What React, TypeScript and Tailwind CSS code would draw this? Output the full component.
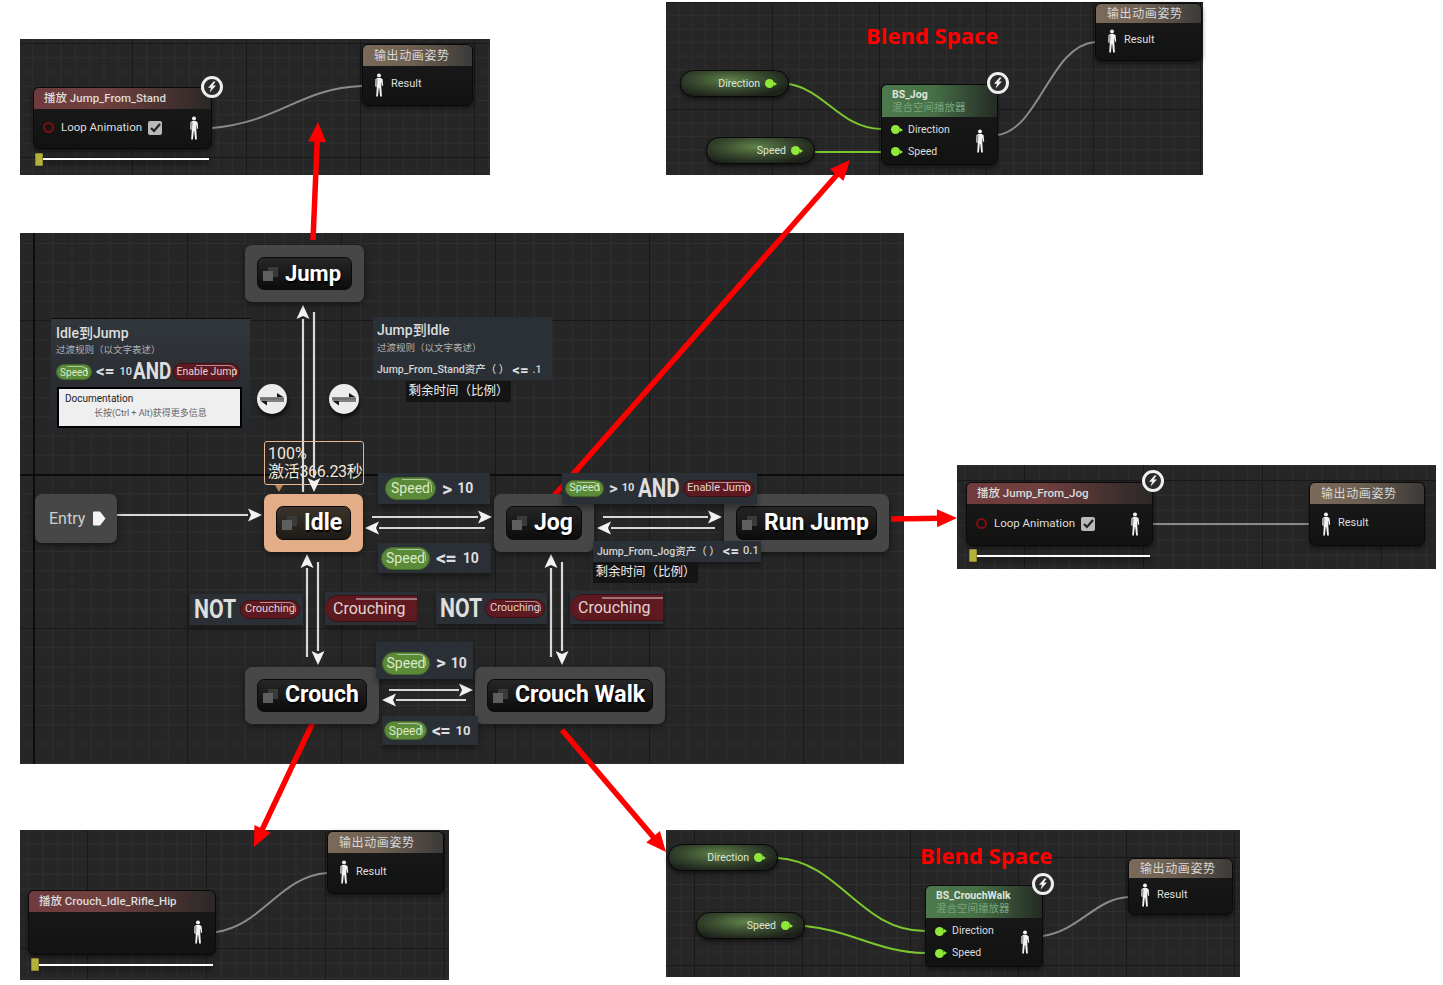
import React from "react";

const GRID = "absolute overflow-hidden bg-[#262626] bg-[image:linear-gradient(#191919_1px,transparent_1px),linear-gradient(90deg,#191919_1px,transparent_1px),linear-gradient(#2f2f2f_1px,transparent_1px),linear-gradient(90deg,#2f2f2f_1px,transparent_1px)]";

function Person({ className = "" }: { className?: string }) {
  return (
    <svg viewBox="0 0 10 24" className={"shrink-0 w-[10px] h-[24px] " + className} fill="#f2f2f2">
      <circle cx="5" cy="2.4" r="2" />
      <path d="M3.2 5h3.6l1.8 1.2.6 6.6-.9.3-.7-4.6-.3 5.2.6 9.8H6.1L5.2 15h-.4l-.9 8.5H2.2l.6-9.8-.3-5.2-.7 4.6-.9-.3.6-6.6z" />
      <path d="M1 6.2h2.6L3 14H1.4z" fill="#9a9a9a" />
    </svg>
  );
}

function Bolt({ className }: { className: string }) {
  return (
    <div className={"absolute w-[22px] h-[22px] rounded-full border-[3px] border-[#f0f0f0] bg-[#2a2a2a] flex items-center justify-center " + className}>
      <svg viewBox="0 0 12 12" className="w-[12px] h-[12px]" fill="#f0f0f0">
        <path d="M7.5.5 2 6.8h3L3.6 11.5 10 4.6H6.8L9.6.5z" />
      </svg>
    </div>
  );
}

function Dot() {
  return (
    <span className="relative inline-block w-[9px] h-[9px] rounded-full bg-[#8fe83a] shrink-0 after:content-[''] after:absolute after:left-[9px] after:top-[2.5px] after:border-y-[2px] after:border-l-[3px] after:border-y-transparent after:border-l-[#8fe83a]" />
  );
}

function Shell({ className, header, children }: { className: string; header: React.ReactNode; children: React.ReactNode }) {
  return (
    <div className={"absolute flex flex-col rounded-[6px] overflow-hidden border border-[#0a0a0a] bg-[linear-gradient(180deg,#1a1a1a,#111311)] shadow-[0_2px_5px_rgba(0,0,0,0.55)] text-[#dedede] " + className}>
      {header}
      {children}
    </div>
  );
}

function ResultNode({ className, headH }: { className: string; headH: string }) {
  return (
    <Shell
      className={className}
      header={
        <div className={"flex items-center pl-[11px] text-[12px] tracking-[0.6px] text-[#d8d8d8] bg-[linear-gradient(90deg,#7b6a59,#6e6052_45%,#3b3a38)] " + headH}>
          输出动画姿势
        </div>
      }
    >
      <div className="flex-1 flex items-center pl-[11px] gap-[7px] text-[11px] pb-[2px]">
        <Person />
        <span>Result</span>
      </div>
    </Shell>
  );
}

function PlayNode({ className, title, loop }: { className: string; title: string; loop: boolean }) {
  return (
    <Shell
      className={className}
      header={
        <div className="h-[21px] flex items-center pl-[10px] text-[11.5px] font-medium text-[#dcdcdc] bg-[linear-gradient(90deg,#6f3b3e,#70403f_40%,#2a2827)]">
          {title}
        </div>
      }
    >
      <div className="flex-1 flex items-center pl-[9px] pr-[12px] pb-[2px] text-[11.5px]">
        {loop && (
          <>
            <span className="w-[11px] h-[11px] rounded-full border-2 border-[#7c0f10] shrink-0" />
            <span className="ml-[7px]">Loop Animation</span>
            <span className="ml-[6px] w-[14px] h-[14px] rounded-[2px] bg-[#b9b9b9] flex items-center justify-center">
              <svg viewBox="0 0 12 12" className="w-[12px] h-[12px]" fill="none" stroke="#222" strokeWidth="2.2">
                <path d="M2 6l3 3 6-7" />
              </svg>
            </span>
          </>
        )}
        <Person className="ml-auto" />
      </div>
    </Shell>
  );
}

function Slider({ line, handle }: { line: string; handle: string }) {
  return (
    <>
      <div className={"absolute h-[2px] bg-white shadow-[0_3px_5px_rgba(0,0,0,0.7)] " + line} />
      <div className={"absolute w-[8px] h-[13px] bg-[#b5b23c] rounded-[1px] border border-[#8c8a2c] " + handle} />
    </>
  );
}

function BlendNode({ className, title }: { className: string; title: string }) {
  return (
    <Shell
      className={className}
      header={
        <div className="h-[32px] flex flex-col justify-center pl-[10px] leading-[13px] bg-[linear-gradient(90deg,#4d7a4d,#466f46_45%,#242a24)]">
          <span className="text-[10.5px] font-bold text-[#dfe6df]">{title}</span>
          <span className="text-[10.5px] text-[#7da37d]">混合空间播放器</span>
        </div>
      }
    >
      <div className="flex-1 flex items-center pl-[9px] pr-[12px] text-[10.5px]">
        <div className="flex flex-col gap-[9px]">
          <div className="flex items-center gap-[7px] h-[13px]"><Dot /><span className="ml-[1px]">Direction</span></div>
          <div className="flex items-center gap-[7px] h-[13px]"><Dot /><span className="ml-[1px]">Speed</span></div>
        </div>
        <Person className="ml-auto" />
      </div>
    </Shell>
  );
}

function Getter({ className, label }: { className: string; label: string }) {
  return (
    <div className={"absolute flex items-center justify-end pr-[14px] gap-[5px] rounded-full border border-[#080808] bg-[#1c211a] bg-[radial-gradient(ellipse_at_45%_35%,#5f8348_0%,#3a4c30_40%,#1c211a_78%)] shadow-[0_2px_4px_rgba(0,0,0,0.6)] text-[10.5px] text-[#dde5d8] " + className}>
      <span>{label}</span>
      <Dot />
    </div>
  );
}

function State({ className, inner, label, size, active }: { className: string; inner?: string; label: string; size: string; active?: boolean }) {
  return (
    <div className={"absolute p-[12px] rounded-[7px] shadow-[0_2px_6px_rgba(0,0,0,0.5)] " + (active ? "bg-[#e3ae87] " : "bg-[#474747] ") + className}>
      <div className={"h-full flex items-center pl-[5px] gap-[7px] rounded-[7px] border border-[#0b0b0b] " + (active ? "bg-[linear-gradient(180deg,#3c342c,#1d1a16)] " : "bg-[linear-gradient(180deg,#262626,#0c0c0c)] ") + (inner ?? "")}>
        <span className="relative w-[15px] h-[14px] shrink-0">
          <span className="absolute right-0 top-0 w-[10px] h-[10px] bg-[#3a3a3a]" />
          <span className="absolute left-0 bottom-0 w-[10px] h-[10px] bg-[#5e5e5e]" />
        </span>
        <span className={"font-bold text-white [text-shadow:1px_2px_1px_#000] " + size}>{label}</span>
      </div>
    </div>
  );
}

function Pill({ red, className, label }: { red?: boolean; className: string; label: string }) {
  return (
    <span className={"relative inline-flex items-center justify-center rounded-full shrink-0 border " + (red ? "bg-[#5e1a20] border-[#3e1014] text-[#e3d3d3] " : "bg-[#5b8a38] border-[#43692a] text-[#dcebc9] ") + className}>
      <span className="absolute top-[1px] right-[3px] w-[62%] h-[60%] rounded-tr-[7px] border-t border-r border-white/50" />
      {label}
    </span>
  );
}

function Wide({ className, children }: { className: string; children: string }) {
  return <span className={"font-bold text-[#dedede] shrink-0 " + className}>{children}</span>;
}

function Box({ className, children }: { className: string; children: React.ReactNode }) {
  return (
    <div className={"absolute flex items-center bg-[#2b3036] shadow-[0_4px_6px_rgba(0,0,0,0.35)] " + className}>
      {children}
    </div>
  );
}

function Swap({ className }: { className: string }) {
  return (
    <div className={"absolute w-[30px] h-[30px] rounded-full bg-[#ececec] shadow-[1px_3px_4px_rgba(0,0,0,0.7)] flex items-center justify-center " + className}>
      <svg viewBox="0 0 30 30" className="w-[30px] h-[30px]" fill="#161616">
        <path d="M3 13h17V9l7 4.6H3zM27 16.4H3l7 5v-4h17z" />
        <path d="M3 14.2h24v1.6H3z" fill="#555" />
      </svg>
    </div>
  );
}

function WhiteArrow({ x1, y1, x2, y2 }: { x1: number; y1: number; x2: number; y2: number }) {
  const a = Math.atan2(y2 - y1, x2 - x1);
  const L = 14;
  const W = 6.5;
  const bx = x2 - L * Math.cos(a);
  const by = y2 - L * Math.sin(a);
  const nx = -Math.sin(a) * W;
  const ny = Math.cos(a) * W;
  return (
    <g>
      <line x1={x1} y1={y1} x2={bx} y2={by} stroke="#d8d8d8" strokeWidth="2.2" />
      <polygon points={`${x2},${y2} ${bx + nx},${by + ny} ${bx + 3 * Math.cos(a)},${by + 3 * Math.sin(a)} ${bx - nx},${by - ny}`} fill="#f2f2f2" />
    </g>
  );
}

function RedArrow({ x1, y1, x2, y2 }: { x1: number; y1: number; x2: number; y2: number }) {
  const a = Math.atan2(y2 - y1, x2 - x1);
  const L = 20;
  const W = 9;
  const bx = x2 - L * Math.cos(a);
  const by = y2 - L * Math.sin(a);
  const nx = -Math.sin(a) * W;
  const ny = Math.cos(a) * W;
  return (
    <g>
      <line x1={x1} y1={y1} x2={bx + 4 * Math.cos(a)} y2={by + 4 * Math.sin(a)} stroke="#ff0000" strokeWidth="5.5" />
      <polygon points={`${x2},${y2} ${bx + nx},${by + ny} ${bx - nx},${by - ny}`} fill="#ff0000" />
    </g>
  );
}

function Blend({ className }: { className: string }) {
  return (
    <div className={"absolute font-['Open_Sans',sans-serif] font-bold text-[22px] leading-[28px] text-[#ff0000] whitespace-nowrap " + className}>
      Blend Space
    </div>
  );
}

export default function App() {
  return (
    <div className="relative w-[1443px] h-[985px] bg-white overflow-hidden font-[Roboto,'Noto_Sans_CJK_SC',sans-serif]">
      {/* graph panels */}
      <div className={GRID + " left-[20px] top-[39px] w-[470px] h-[136px] bg-[size:114px_114px,114px_114px,14.25px_14.25px,14.25px_14.25px] bg-[position:112px_4px,112px_4px,112px_4px,112px_4px]"} />
      <div className={GRID + " left-[666px] top-[2px] w-[537px] h-[173px] bg-[size:107px_107px,107px_107px,13.4px_13.4px,13.4px_13.4px] bg-[position:106px_0px,106px_0px,106px_0px,106px_0px]"} />
      <div className={GRID + " left-[20px] top-[233px] w-[884px] h-[531px] bg-[size:154px_154px,154px_154px,19.25px_19.25px,19.25px_19.25px] bg-[position:13px_87px,13px_87px,13px_87px,13px_87px]"}>
        <div className="absolute left-[13px] top-0 w-[2px] h-full bg-[#0c0c0c]" />
        <div className="absolute left-0 top-[241px] w-full h-[2px] bg-[#0c0c0c]" />
      </div>
      <div className={GRID + " left-[957px] top-[465px] w-[479px] h-[104px] bg-[size:119px_119px,119px_119px,14.9px_14.9px,14.9px_14.9px] bg-[position:67px_15px,67px_15px,67px_15px,67px_15px]"} />
      <div className={GRID + " left-[20px] top-[830px] w-[429px] h-[150px] bg-[size:119px_119px,119px_119px,14.9px_14.9px,14.9px_14.9px] bg-[position:67px_118px,67px_118px,67px_118px,67px_118px]"} />
      <div className={GRID + " left-[666px] top-[830px] w-[574px] h-[147px] bg-[size:108px_108px,108px_108px,13.5px_13.5px,13.5px_13.5px] bg-[position:136px_27px,136px_27px,136px_27px,136px_27px]"} />

      {/* wires, transitions and callout arrows */}
      <svg className="absolute left-0 top-0 w-[1443px] h-[985px]" viewBox="0 0 1443 985" fill="none">
        <path d="M212 128C280 122 300 88 362 86" stroke="#8a8a8a" strokeWidth="2" />
        <path d="M998 135C1040 128 1050 46 1095 42" stroke="#8a8a8a" strokeWidth="2" />
        <path d="M789 84C825 90 840 128 881 129" stroke="#7cc62e" strokeWidth="2" />
        <path d="M815 152H881" stroke="#7cc62e" strokeWidth="2" />
        <path d="M1153 524H1309" stroke="#8a8a8a" strokeWidth="2" />
        <path d="M216 932C262 926 280 876 327 873" stroke="#8a8a8a" strokeWidth="2" />
        <path d="M778 858C840 862 860 931 925 931" stroke="#7cc62e" strokeWidth="2" />
        <path d="M805 926C850 930 880 953 925 953" stroke="#7cc62e" strokeWidth="2" />
        <path d="M1043 936C1080 930 1095 899 1128 897" stroke="#8a8a8a" strokeWidth="2" />

        <WhiteArrow x1={117} y1={515} x2={262} y2={515} />
        <WhiteArrow x1={372} y1={517} x2={492} y2={517} />
        <WhiteArrow x1={485} y1={528} x2={365} y2={528} />
        <WhiteArrow x1={603} y1={517} x2={722} y2={517} />
        <WhiteArrow x1={715} y1={528} x2={597} y2={528} />
        <WhiteArrow x1={303} y1={492} x2={303} y2={305} />
        <WhiteArrow x1={307} y1={657} x2={307} y2={554} />
        <WhiteArrow x1={318} y1={562} x2={318} y2={665} />
        <WhiteArrow x1={551} y1={657} x2={551} y2={554} />
        <WhiteArrow x1={562} y1={562} x2={562} y2={665} />
        <WhiteArrow x1={389} y1={690} x2={473} y2={690} />
        <WhiteArrow x1={466} y1={700} x2={382} y2={700} />

        <RedArrow x1={313} y1={240} x2={318} y2={122} />
        <RedArrow x1={552} y1={498} x2={850} y2={160} />
        <RedArrow x1={891} y1={519} x2={957} y2={518} />
        <RedArrow x1={313} y1={722} x2={254} y2={847} />
        <RedArrow x1={562} y1={730} x2={666} y2={852} />
      </svg>

      {/* top-left animation graph */}
      <PlayNode className="left-[33px] top-[87px] w-[179px] h-[62px]" title="播放 Jump_From_Stand" loop />
      <Bolt className="left-[201px] top-[76px]" />
      <Slider line="left-[37px] top-[158px] w-[172px]" handle="left-[35px] top-[153px]" />
      <ResultNode className="left-[362px] top-[44px] w-[111px] h-[62px]" headH="h-[21px]" />

      {/* top-right blend graph */}
      <Blend className="left-[866px] top-[21px]" />
      <Getter className="left-[680px] top-[70px] w-[109px] h-[27px]" label="Direction" />
      <Getter className="left-[706px] top-[137px] w-[109px] h-[27px]" label="Speed" />
      <BlendNode className="left-[881px] top-[84px] w-[117px] h-[81px]" title="BS_Jog" />
      <Bolt className="left-[987px] top-[72px]" />
      <ResultNode className="left-[1095px] top-[3px] w-[107px] h-[58px]" headH="h-[19px]" />

      {/* state machine */}
      <State className="left-[245px] top-[245px] w-[119px] h-[57px]" label="Jump" size="text-[22px]" />
      <div className="absolute left-[35px] top-[494px] w-[82px] h-[49px] rounded-[7px] bg-[#474747] shadow-[0_2px_6px_rgba(0,0,0,0.5)] flex items-center pl-[14px] gap-[7px] text-[16px] text-[#cfcfcf]">
        Entry
        <svg viewBox="0 0 14 15" className="w-[14px] h-[15px]" fill="#f4f4f4"><path d="M1 1.5q0-1 1-1h6l5.500 7-5.500 7H2q-1 0-1-1z" /></svg>
      </div>
      <State className="left-[264px] top-[494px] w-[99px] h-[58px]" label="Idle" size="text-[23px]" active />
      <State className="left-[494px] top-[494px] w-[100px] h-[58px]" label="Jog" size="text-[23px]" />
      <State className="left-[724px] top-[494px] w-[165px] h-[58px]" label="Run Jump" size="text-[23px]" />
      <State className="left-[245px] top-[667px] w-[134px] h-[57px]" label="Crouch" size="text-[23px]" />
      <State className="left-[475px] top-[667px] w-[190px] h-[57px]" label="Crouch Walk" size="text-[23px]" />

      <div className="absolute left-[264px] top-[441px] w-[100px] h-[44px] rounded-[3px] border border-[#e9b78f] bg-[linear-gradient(180deg,#bd8f6a,#e0a97e)]/90 px-[3px] leading-[18px] pt-[3px] text-[16px] text-[#efe6dc] whitespace-nowrap">
        <div>100%</div>
        <div className="tracking-[-0.3px]">激活366.23秒</div>
      </div>
      <div className="absolute left-[275px] top-[485px] border-x-[4px] border-t-[7px] border-x-transparent border-t-[#b98357]" />
      <svg className="absolute left-[300px] top-[305px] w-[30px] h-[190px]" viewBox="300 305 30 190" fill="none">
        <WhiteArrow x1={314} y1={312} x2={314} y2={492} />
      </svg>

      <Swap className="left-[257px] top-[384px]" />
      <Swap className="left-[329px] top-[384px]" />

      {/* tooltip: Idle to Jump */}
      <div className="absolute left-[51px] top-[318px] w-[199px] h-[112px] bg-[linear-gradient(180deg,#32373d,#24272b)] border-t border-[#0c0c0c] px-[5px] pt-[5px] flex flex-col">
        <div className="text-[14px] leading-[18px] font-medium text-[#dedede]">Idle到Jump</div>
        <div className="text-[9.5px] leading-[14px] mt-[1px] text-[#b0b0b0]">过渡规则（以文字表述）</div>
        <div className="flex items-center mt-[5px] h-[20px]">
          <Pill className="w-[36px] h-[16px] text-[10px]" label="Speed" />
          <Wide className="ml-[4px] text-[17px]">{"<="}</Wide>
          <span className="ml-[5px] text-[11px] font-medium text-[#dedede] w-[11px] shrink-0">10</span>
          <Wide className="ml-[3px] w-[37px] text-[23px] scale-x-[0.82] origin-left">AND</Wide>
          <Pill red className="ml-[3px] w-[67px] h-[18px] text-[10.5px]" label="Enable Jump" />
        </div>
        <div className="ml-[1px] mt-[5px] w-[185px] h-[41px] bg-[#efefef] border-2 border-black flex flex-col pl-[6px] pt-[3px] text-[#222]">
          <span className="text-[10px] leading-[13px]">Documentation</span>
          <span className="text-[9px] leading-[13px] mt-[2px] ml-[29px] text-[#666]">长按(Ctrl + Alt)获得更多信息</span>
        </div>
      </div>

      {/* tooltip: Jump to Idle */}
      <div className="absolute left-[373px] top-[317px] w-[179px] h-[63px] bg-[#2b3036] px-[4px] pt-[4px] flex flex-col">
        <div className="text-[14px] leading-[18px] font-medium text-[#dedede]">Jump到Idle</div>
        <div className="text-[9.5px] leading-[14px] mt-[2px] text-[#b0b0b0]">过渡规则（以文字表述）</div>
        <div className="flex items-center mt-[7px] h-[16px] text-[10.5px] font-medium text-[#d4d4d4] whitespace-nowrap">
          Jump_From_Stand资产（ ）
          <Wide className="ml-[3px] text-[15px]">{"<="}</Wide>
          <span className="ml-[4px]">.1</span>
        </div>
      </div>
      <div className="absolute left-[406px] top-[381px] w-[105px] h-[21px] bg-[#141414] flex items-center justify-center text-[12.5px] text-[#ededed] whitespace-nowrap">剩余时间（比例）</div>

      {/* transition rules */}
      <Box className="left-[378px] top-[473px] w-[112px] h-[31px] pl-[7px]">
        <Pill className="w-[51px] h-[23px] text-[14px]" label="Speed" />
        <Wide className="ml-[6px] text-[20px]">{">"}</Wide>
        <Wide className="ml-[5px] text-[14px]">10</Wide>
      </Box>
      <Box className="left-[562px] top-[473px] w-[195px] h-[31px] pl-[3px]">
        <Pill className="w-[39px] h-[17px] text-[11px]" label="Speed" />
        <Wide className="ml-[5px] text-[17px]">{">"}</Wide>
        <Wide className="ml-[4px] text-[11px]">10</Wide>
        <Wide className="ml-[4px] w-[41px] text-[25px] scale-x-[0.82] origin-left">AND</Wide>
        <Pill red className="ml-[4px] w-[71px] h-[17px] text-[11px]" label="Enable Jump" />
      </Box>
      <Box className="left-[378px] top-[543px] w-[113px] h-[30px] pl-[3px]">
        <Pill className="w-[49px] h-[23px] text-[14px]" label="Speed" />
        <Wide className="ml-[6px] text-[20px] tracking-[-1px]">{"<="}</Wide>
        <Wide className="ml-[7px] text-[14px]">10</Wide>
      </Box>
      <Box className="left-[593px] top-[541px] w-[168px] h-[21px] pl-[4px] text-[10.5px] font-medium text-[#d4d4d4] whitespace-nowrap">
        Jump_From_Jog资产（ ）
        <Wide className="ml-[3px] text-[15px]">{"<="}</Wide>
        <span className="ml-[4px] text-[11px]">0.1</span>
      </Box>
      <div className="absolute left-[593px] top-[562px] w-[105px] h-[21px] bg-[#141414] flex items-center justify-center text-[12.5px] text-[#ededed] whitespace-nowrap">剩余时间（比例）</div>
      <Box className="left-[190px] top-[594px] w-[113px] h-[31px] pl-[4px]">
        <Wide className="w-[41px] text-[25px] scale-x-[0.85] origin-left">NOT</Wide>
        <Pill red className="ml-[5px] w-[60px] h-[19px] text-[11px]" label="Crouching" />
      </Box>
      <Box className="left-[325px] top-[592px] w-[92px] h-[33px]">
        <div className="relative w-full h-[27px] flex items-center pl-[8px] rounded-l-full bg-[#5e1a20] border-y border-[#3e1014] text-[16px] text-[#e3d3d3]">
          <span className="absolute top-[2px] right-0 w-[66%] h-[2px] bg-white/40" />
          Crouching
        </div>
      </Box>
      <Box className="left-[436px] top-[593px] w-[111px] h-[31px] pl-[4px]">
        <Wide className="w-[41px] text-[25px] scale-x-[0.85] origin-left">NOT</Wide>
        <Pill red className="ml-[4px] w-[60px] h-[19px] text-[11px]" label="Crouching" />
      </Box>
      <Box className="left-[570px] top-[591px] w-[93px] h-[33px]">
        <div className="relative w-full h-[27px] flex items-center pl-[8px] rounded-l-full bg-[#5e1a20] border-y border-[#3e1014] text-[16px] text-[#e3d3d3]">
          <span className="absolute top-[2px] right-0 w-[66%] h-[2px] bg-white/40" />
          Crouching
        </div>
      </Box>
      <Box className="left-[376px] top-[642px] w-[97px] h-[37px] pl-[6px] pt-[5px]">
        <Pill className="w-[48px] h-[23px] text-[14px]" label="Speed" />
        <Wide className="ml-[6px] text-[19px]">{">"}</Wide>
        <Wide className="ml-[5px] text-[14px]">10</Wide>
      </Box>
      <Box className="left-[382px] top-[716px] w-[96px] h-[29px] pl-[2px]">
        <Pill className="w-[43px] h-[19px] text-[12px]" label="Speed" />
        <Wide className="ml-[5px] text-[18px] tracking-[-1px]">{"<="}</Wide>
        <Wide className="ml-[6px] text-[13px]">10</Wide>
      </Box>

      {/* right animation graph */}
      <PlayNode className="left-[966px] top-[482px] w-[187px] h-[64px]" title="播放 Jump_From_Jog" loop />
      <Bolt className="left-[1142px] top-[470px]" />
      <Slider line="left-[971px] top-[555px] w-[179px]" handle="left-[969px] top-[549px]" />
      <ResultNode className="left-[1309px] top-[482px] w-[116px] h-[64px]" headH="h-[21px]" />

      {/* bottom-left animation graph */}
      <PlayNode className="left-[28px] top-[890px] w-[188px] h-[65px]" title="播放 Crouch_Idle_Rifle_Hip" loop={false} />
      <Slider line="left-[33px] top-[964px] w-[180px]" handle="left-[31px] top-[958px]" />
      <ResultNode className="left-[327px] top-[831px] w-[117px] h-[63px]" headH="h-[21px]" />

      {/* bottom-right blend graph */}
      <Blend className="left-[920px] top-[841px]" />
      <Getter className="left-[668px] top-[844px] w-[110px] h-[27px]" label="Direction" />
      <Getter className="left-[696px] top-[912px] w-[109px] h-[27px]" label="Speed" />
      <BlendNode className="left-[925px] top-[885px] w-[118px] h-[82px]" title="BS_CrouchWalk" />
      <Bolt className="left-[1032px] top-[873px]" />
      <ResultNode className="left-[1128px] top-[858px] w-[105px] h-[57px]" headH="h-[19px]" />
    </div>
  );
}
